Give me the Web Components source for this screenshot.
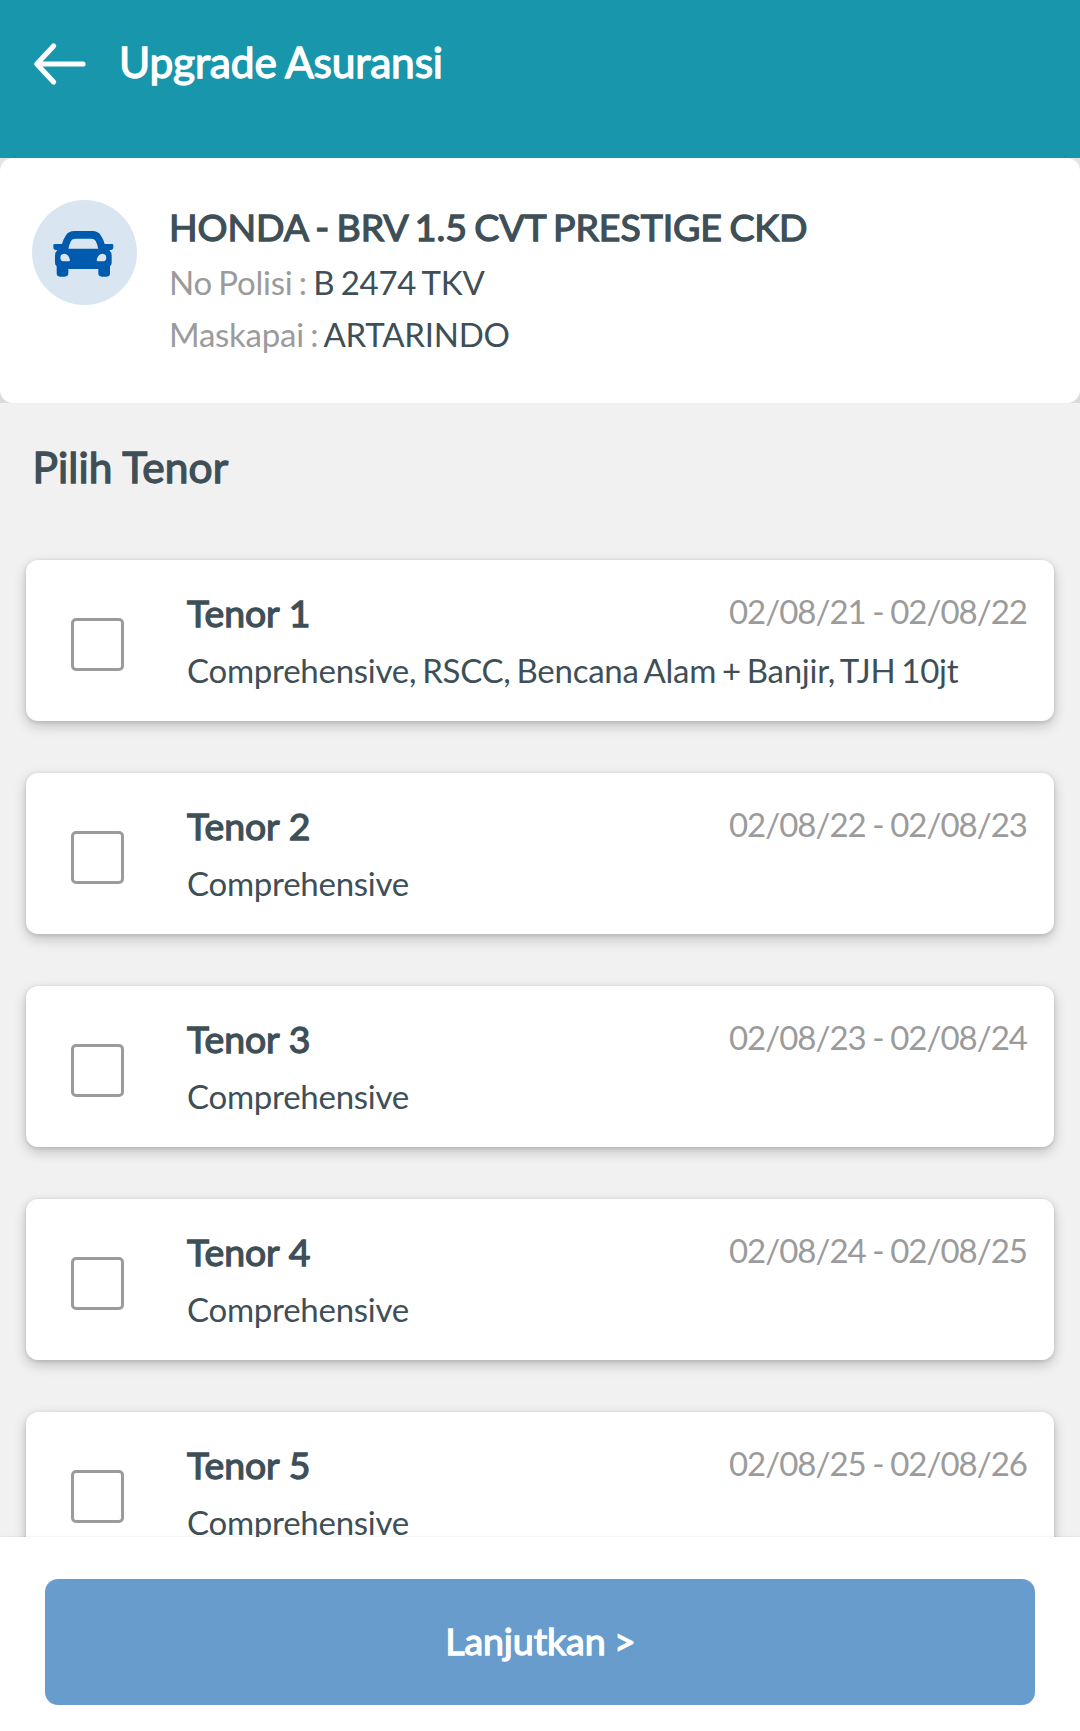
<!DOCTYPE html>
<html lang="id">
<head>
<meta charset="utf-8">
<title>Upgrade Asuransi</title>
<style>
  html, body { margin: 0; height: 100%; }
  body { font-family: Lato, sans-serif; color: #3e4f57; background: #f1f1f1; overflow: hidden; }
</style>
</head>
<body>
<upgrade-page>
  <app-header slot="header">Upgrade Asuransi</app-header>
  <vehicle-card slot="vehicle" name="HONDA - BRV 1.5 CVT PRESTIGE CKD">
    <info-line label="No Polisi :">B 2474 TKV</info-line>
    <info-line label="Maskapai :">ARTARINDO</info-line>
  </vehicle-card>
  <span slot="title">Pilih Tenor</span>
  <tenor-card name="Tenor 1" period="02/08/21 - 02/08/22">Comprehensive, RSCC, Bencana Alam + Banjir, TJH 10jt</tenor-card>
  <tenor-card name="Tenor 2" period="02/08/22 - 02/08/23">Comprehensive</tenor-card>
  <tenor-card name="Tenor 3" period="02/08/23 - 02/08/24">Comprehensive</tenor-card>
  <tenor-card name="Tenor 4" period="02/08/24 - 02/08/25">Comprehensive</tenor-card>
  <tenor-card name="Tenor 5" period="02/08/25 - 02/08/26">Comprehensive</tenor-card>
  <action-bar slot="footer">Lanjutkan &gt;</action-bar>
</upgrade-page>
<script>
class BaseElement extends HTMLElement {
  connectedCallback() {
    if (this.shadowRoot) return;
    this.attachShadow({ mode: 'open' }).innerHTML = this.render();
  }
  attr(name) { return this.getAttribute(name) || ''; }
}

customElements.define('upgrade-page', class extends BaseElement {
  render() { return `
    <style>
      :host { display: flex; flex-direction: column; height: 100vh; }
      main { flex: 1; min-height: 0; overflow: hidden; }
      .title { margin: 0; padding: 38px 32px 0 32.5px; font-weight: 400; font-size: 42.5px; line-height: 52px;
        letter-spacing: .1px; word-spacing: 0; -webkit-text-stroke: 1.3px currentColor; }
      .list { display: flex; flex-direction: column; gap: 52px; padding: 67px 26px 52px; }
    </style>
    <slot name="header"></slot>
    <main>
      <slot name="vehicle"></slot>
      <h2 class="title"><slot name="title"></slot></h2>
      <div class="list"><slot></slot></div>
    </main>
    <slot name="footer"></slot>`; }
});

customElements.define('app-header', class extends BaseElement {
  render() { return `
    <style>
      :host { display: flex; flex: none; align-items: flex-start; gap: 29px; box-sizing: border-box; height: 158px;
        padding: 36px 30px 0; background: #1896ac; color: #fff; }
      svg { display: block; width: 60px; height: 56px; }
      h1 { margin: 0; font-weight: 400; font-size: 42.5px; line-height: 52px; letter-spacing: -.2px;
        word-spacing: -.9px; -webkit-text-stroke: 1.3px currentColor; }
    </style>
    <svg viewBox="30 36 60 56" fill="none" stroke="#fff" stroke-width="5.2" stroke-linecap="round" stroke-linejoin="round">
      <path d="M83 64H37M53.6 46L36.8 64L53.6 82"/>
    </svg>
    <h1><slot></slot></h1>`; }
});

customElements.define('vehicle-card', class extends BaseElement {
  render() { return `
    <style>
      :host { display: block; background: linear-gradient(#e4e4e4, #dadada); }
      .card { display: flex; gap: 32px; box-sizing: border-box; height: 245px; padding: 42px 32px 0;
        border-radius: 13px; background: #fff; }
      svg { display: block; flex: none; width: 105px; height: 105px; }
      .text { display: flex; flex-direction: column; gap: 12px; padding-top: 3px; }
      .name { font-size: 37.5px; line-height: 47px; letter-spacing: -.1px; word-spacing: -2px;
        -webkit-text-stroke: 1.3px currentColor; }
    </style>
    <div class="card">
      <svg viewBox="36 30 315 315">
        <circle cx="193.5" cy="187.5" r="157.5" fill="#d9e5f1"/>
        <path fill="#005baf" fill-rule="evenodd" d="M163 123H217Q235 123 243 137Q251 149 254 162H276Q280 162 280 166V171Q280 180 272 180H268Q275 187 275 197V219Q275 225 270 229V250Q270 260 260 260H246Q235 260 235 250V237H145V250Q145 260 134 260H120Q110 260 110 250V229Q105 225 105 219V197Q105 187 112 180H108Q100 180 100 171V166Q100 162 104 162H126Q129 149 137 137Q145 123 163 123ZM166 146Q157 146 153 153Q148 162 145 176H235Q232 162 227 153Q223 146 214 146ZM132 191Q121 192 121 203Q121 214 133 214H146Q150 214 150 210Q145 191 132 191ZM248 191Q235 191 230 210Q230 214 234 214H247Q259 214 259 203Q259 192 248 191Z"/>
      </svg>
      <div class="text">
        <div class="name">${this.attr('name')}</div>
        <slot></slot>
      </div>
    </div>`; }
});

customElements.define('info-line', class extends BaseElement {
  render() { return `
    <style>
      :host { display: block; font-size: 33px; line-height: 40px; letter-spacing: -.25px; word-spacing: -1.8px; white-space: nowrap; }
      .label { color: #9b9b9b; }
    </style>
    <span class="label">${this.attr('label')}</span> <slot></slot>`; }
});

customElements.define('tenor-card', class extends BaseElement {
  render() { return `
    <style>
      :host { display: flex; align-items: flex-start; gap: 63px; box-sizing: border-box; height: 161px;
        padding: 29px 27px 0 45px; border-radius: 12px; background: #fff;
        box-shadow: 0 5px 13px rgba(0,0,0,.2), 0 1px 4px rgba(0,0,0,.13); }
      .box { flex: none; box-sizing: border-box; width: 53px; height: 53px; margin-top: 29px;
        border: 3px solid #9b9b9b; border-radius: 5px; }
      .body { flex: 1; min-width: 0; }
      .row { display: flex; justify-content: space-between; align-items: flex-start; }
      .name { font-size: 37.4px; line-height: 48px; letter-spacing: -.05px; word-spacing: .4px; -webkit-text-stroke: 1.3px currentColor; }
      .period { padding-top: 2px; color: #9b9b9b; font-size: 33px; line-height: 40px; letter-spacing: -.98px; word-spacing: -.9px; }
      .desc { margin-top: 13px; font-size: 33px; line-height: 40px; letter-spacing: -.25px; word-spacing: -2.3px; white-space: nowrap; }
    </style>
    <div class="box" role="checkbox" aria-checked="false"></div>
    <div class="body">
      <div class="row"><div class="name">${this.attr('name')}</div><div class="period">${this.attr('period')}</div></div>
      <div class="desc"><slot></slot></div>
    </div>`; }
});

customElements.define('action-bar', class extends BaseElement {
  render() { return `
    <style>
      :host { display: block; flex: none; box-sizing: border-box; height: 194px; padding: 42px 45px 0;
        background: #fff; box-shadow: 0 0 2px rgba(0,0,0,.14); position: relative; }
      button { display: flex; align-items: center; justify-content: center; box-sizing: border-box; width: 100%; height: 126px;
        margin: 0; padding: 0 0 2px 1px; border: 0; border-radius: 13px; background: #679ccc; color: #fff;
        font: 400 37.6px/48px Lato, sans-serif; letter-spacing: -.08px; word-spacing: -1px; -webkit-text-stroke: 1.3px currentColor; }
    </style>
    <button type="button"><slot></slot></button>`; }
});
</script>
</body>
</html>
